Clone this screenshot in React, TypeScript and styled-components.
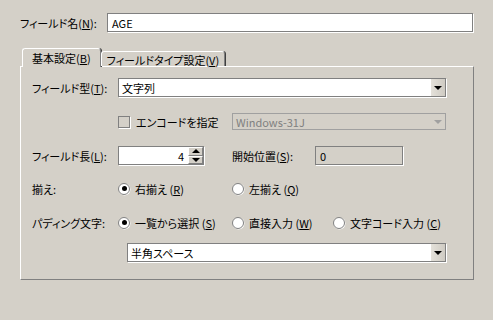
import { createGlobalStyle, styled } from "styled-components";

const GlobalStyle = createGlobalStyle`
  html, body {
    margin: 0;
    background: #d4d0c8;
  }
  body {
    font-family: "Noto Sans CJK JP", "Liberation Sans", sans-serif;
    font-size: 11px;
    font-feature-settings: "palt";
    color: #000;
  }
`;

const App = () => {
  return (
    <>
      <GlobalStyle />
      <Page>
        <TopRow>
          <TopLabel>
            フィールド名(<u>N</u>):
          </TopLabel>
          <TextBox>AGE</TextBox>
        </TopRow>

        <TabStrip>
          <Tab $active>
            基本設定(<u>B</u>)
          </Tab>
          <Tab>
            フィールドタイプ設定(<u>V</u>)
          </Tab>
        </TabStrip>

        <Panel>
          <FormGrid>
            <Cell>
              フィールド型(<u>T</u>):
            </Cell>
            <Cell $span>
              <Combo>
                <ComboText>文字列</ComboText>
                <ComboButton>
                  <Arrow />
                </ComboButton>
              </Combo>
            </Cell>

            <Cell />
            <Cell>
              <CheckBox />
              <OptionText>エンコードを指定</OptionText>
            </Cell>
            <Cell>
              <Combo $disabled $height={17}>
                <ComboText $disabled>Windows-31J</ComboText>
                <ComboButton $disabled>
                  <Arrow $disabled />
                </ComboButton>
              </Combo>
            </Cell>

            <Cell>
              フィールド長(<u>L</u>):
            </Cell>
            <Cell>
              <Spin>
                <SpinValue>4</SpinValue>
                <SpinButtons>
                  <SpinButton>
                    <UpArrow />
                  </SpinButton>
                  <SpinButton>
                    <Arrow />
                  </SpinButton>
                </SpinButtons>
              </Spin>
            </Cell>
            <Cell>
              <StartLabel>
                開始位置(<u>S</u>):
              </StartLabel>
              <ReadOnlyBox>0</ReadOnlyBox>
            </Cell>

            <Cell>揃え:</Cell>
            <Cell>
              <Radio $checked />
              <OptionText>
                右揃え (<u>R</u>)
              </OptionText>
            </Cell>
            <Cell>
              <Radio />
              <OptionText>
                左揃え (<u>Q</u>)
              </OptionText>
            </Cell>

            <Cell>パディング文字:</Cell>
            <Cell>
              <Radio $checked />
              <OptionText>
                一覧から選択 (<u>S</u>)
              </OptionText>
            </Cell>
            <Cell>
              <RadioSlot>
                <Radio />
                <OptionText>
                  直接入力 (<u>W</u>)
                </OptionText>
              </RadioSlot>
              <Radio />
              <OptionText>
                文字コード入力 (<u>C</u>)
              </OptionText>
            </Cell>

            <Cell />
            <Cell $span $indent={9}>
              <Combo>
                <ComboText>半角スペース</ComboText>
                <ComboButton>
                  <Arrow />
                </ComboButton>
              </Combo>
            </Cell>
          </FormGrid>
        </Panel>
      </Page>
    </>
  );
};

const Page = styled.div`
  width: 493px;
  height: 320px;
  box-sizing: border-box;
  padding: 13px 19px 0 20px;
  background: #d4d0c8;
`;

const TopRow = styled.div`
  display: flex;
  align-items: center;
  height: 19px;
`;

const TopLabel = styled.div`
  width: 87px;
  white-space: nowrap;
`;

const TextBox = styled.div`
  flex: 1;
  height: 19px;
  box-sizing: border-box;
  border: 1px solid #808080;
  box-shadow: 1px 1px 0 #fff;
  background: #fff;
  padding-left: 4px;
  display: flex;
  align-items: center;
  margin-right: 1px;
`;

const TabStrip = styled.div`
  display: flex;
  align-items: flex-end;
  margin-top: 16px;
  padding-left: 2px;
  position: relative;
  z-index: 1;
`;

const Tab = styled.div<{ $active?: boolean }>`
  height: ${(p) => (p.$active ? 19 : 15)}px;
  box-sizing: border-box;
  padding: 0 ${(p) => (p.$active ? 9 : 5)}px;
  display: flex;
  align-items: center;
  white-space: nowrap;
  background: #d4d0c8;
  border-top: 1px solid #fff;
  border-left: 1px solid #fff;
  border-right: 1px solid #808080;
  box-shadow: 1px 0 0 #404040;
  border-radius: 3px 3px 0 0;
  margin-bottom: ${(p) => (p.$active ? -1 : 0)}px;
  ${(p) => (p.$active ? "" : "padding-top: 1px;")}
`;

const Panel = styled.div`
  height: 214px;
  box-sizing: border-box;
  border-top: 1px solid #fff;
  border-left: 1px solid #fff;
  border-right: 1px solid #808080;
  border-bottom: 1px solid #808080;
  padding: 11px 0 0 11px;
`;

const FormGrid = styled.div`
  display: grid;
  grid-template-columns: 86px 114px 214px;
  grid-template-rows: 34px 34px 33px 34px 30px 19px;
`;

const Cell = styled.div<{ $span?: boolean; $indent?: number }>`
  display: flex;
  align-items: center;
  height: 19px;
  white-space: nowrap;
  ${(p) => (p.$span ? "grid-column: 2 / 4;" : "")}
  padding-left: ${(p) => p.$indent ?? 0}px;
`;

const Combo = styled.div<{ $disabled?: boolean; $height?: number }>`
  flex: 1;
  height: ${(p) => p.$height ?? 19}px;
  box-sizing: border-box;
  display: flex;
  border: 1px solid ${(p) => (p.$disabled ? "#a0a0a0" : "#808080")};
  box-shadow: ${(p) => (p.$disabled ? "none" : "1px 1px 0 #fff")};
  background: ${(p) => (p.$disabled ? "#d4d0c8" : "#fff")};
`;

const ComboText = styled.div<{ $disabled?: boolean }>`
  flex: 1;
  display: flex;
  align-items: center;
  padding-left: 3px;
  color: ${(p) => (p.$disabled ? "#808080" : "#000")};
`;

const ComboButton = styled.div<{ $disabled?: boolean }>`
  width: 14px;
  display: flex;
  align-items: center;
  justify-content: center;
  background: ${(p) =>
    p.$disabled ? "transparent" : "linear-gradient(90deg, #e4e1da, #cfcbc3)"};
`;

const Arrow = styled.div<{ $disabled?: boolean }>`
  width: 0;
  height: 0;
  border-left: 4px solid transparent;
  border-right: 4px solid transparent;
  border-top: 4px solid ${(p) => (p.$disabled ? "#a0a0a0" : "#000")};
`;

const UpArrow = styled.div`
  width: 0;
  height: 0;
  border-left: 4px solid transparent;
  border-right: 4px solid transparent;
  border-bottom: 4px solid #000;
`;

const CheckBox = styled.div`
  width: 12px;
  height: 12px;
  box-sizing: border-box;
  border: 1px solid #808080;
  box-shadow: 1px 1px 0 #fff;
  background: #d4d0c8;
  margin-right: 6px;
`;

const OptionText = styled.span`
  white-space: nowrap;
`;

const Radio = styled.div<{ $checked?: boolean }>`
  width: 12px;
  height: 12px;
  box-sizing: border-box;
  border-radius: 50%;
  border: 1px solid #808080;
  box-shadow: 0.5px 0.5px 0 #fff;
  background: #fff;
  margin-right: 5px;
  display: flex;
  align-items: center;
  justify-content: center;
  &::after {
    content: "";
    width: 5px;
    height: 5px;
    border-radius: 50%;
    background: ${(p) => (p.$checked ? "#000" : "transparent")};
  }
`;

const RadioSlot = styled.div`
  display: flex;
  align-items: center;
  width: 101px;
`;

const Spin = styled.div`
  width: 86px;
  height: 19px;
  box-sizing: border-box;
  display: flex;
  border: 1px solid #808080;
  box-shadow: 1px 1px 0 #fff;
  background: #fff;
`;

const SpinValue = styled.div`
  flex: 1;
  display: flex;
  align-items: center;
  justify-content: flex-end;
  padding-right: 4px;
`;

const SpinButtons = styled.div`
  width: 15px;
  display: flex;
  flex-direction: column;
`;

const SpinButton = styled.div`
  flex: 1;
  display: flex;
  align-items: center;
  justify-content: center;
  background: #d4d0c8;
  border-top: 1px solid #fff;
  border-left: 1px solid #fff;
  border-right: 1px solid #808080;
  border-bottom: 1px solid #808080;
  box-sizing: border-box;
`;

const StartLabel = styled.div`
  width: 83px;
`;

const ReadOnlyBox = styled.div`
  width: 88px;
  height: 19px;
  box-sizing: border-box;
  border: 1px solid #808080;
  box-shadow: 1px 1px 0 #fff;
  background: #d4d0c8;
  display: flex;
  align-items: center;
  padding-left: 4px;
`;

export default App;
